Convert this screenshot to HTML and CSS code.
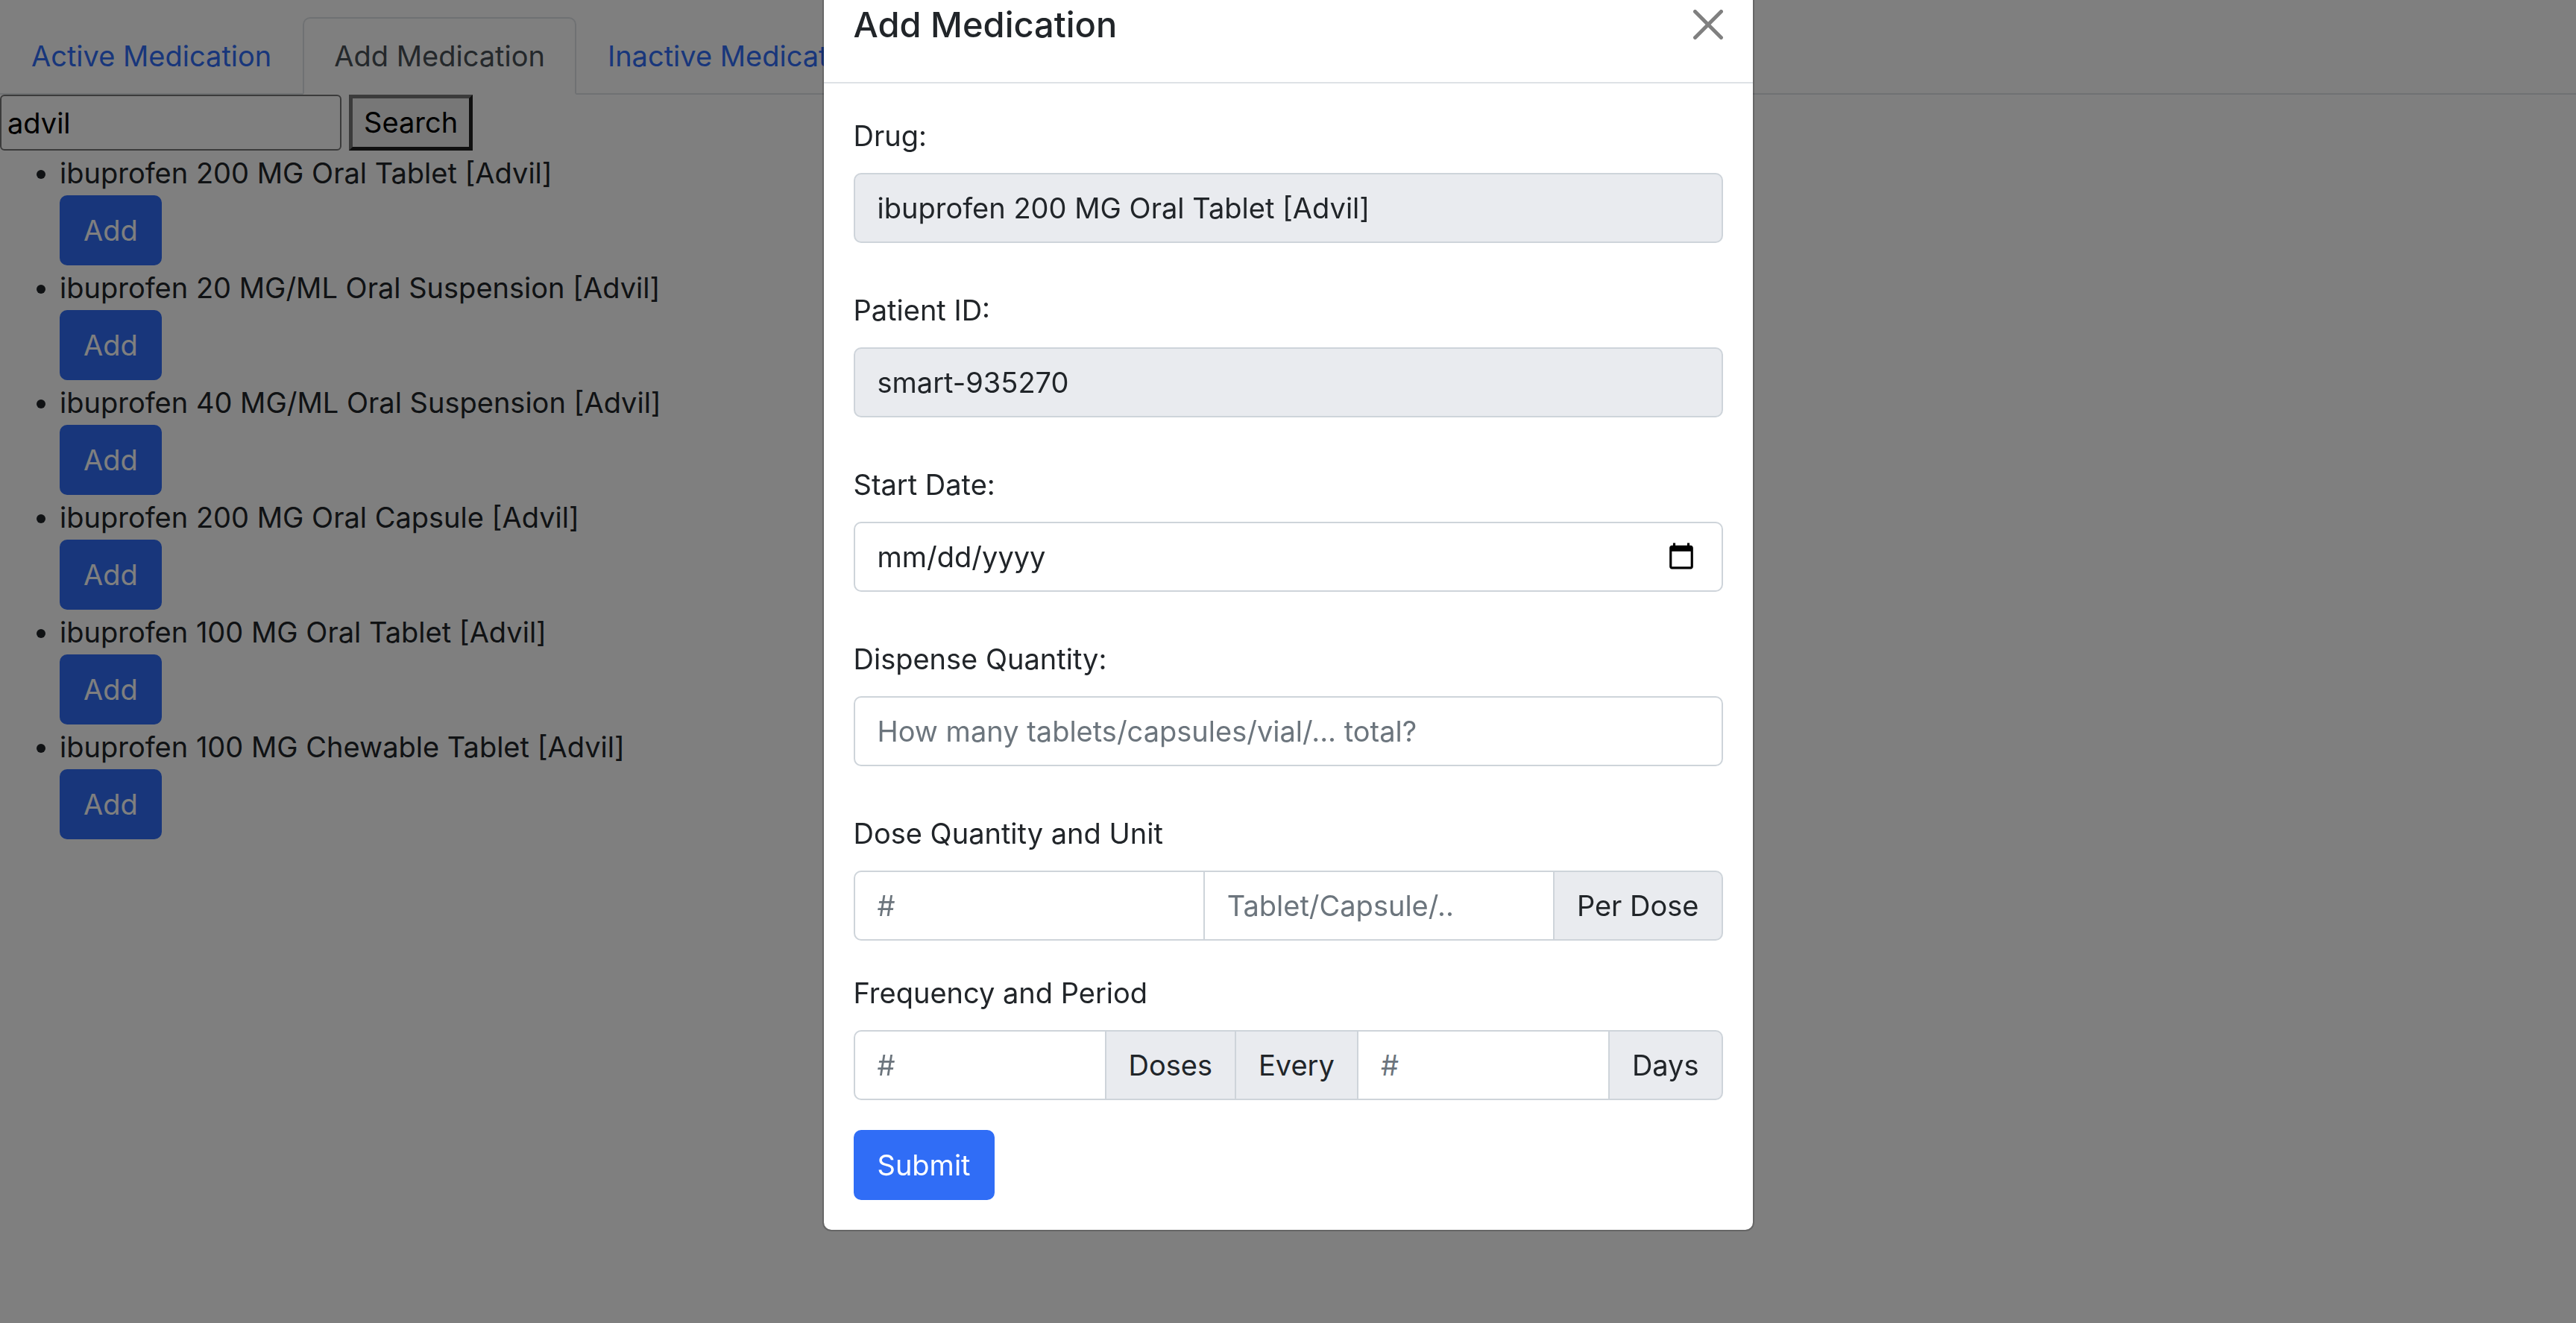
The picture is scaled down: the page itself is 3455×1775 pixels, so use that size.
FILE: index.html
```html
<!DOCTYPE html>
<html lang="en-US">
<head>
<meta charset="utf-8">
<meta name="viewport" content="width=device-width, initial-scale=1">
<title>Add Medication</title>
<link rel="stylesheet" href="styles.css">
</head>
<body>
<nav class="tabs">
  <a class="tab" href="#active">Active Medication</a>
  <a class="tab tab-current" href="#add" aria-current="page">Add Medication</a>
  <a class="tab" href="#inactive">Inactive Medication</a>
</nav>
<main>
  <form class="search">
    <input class="search-input" type="text" value="advil" aria-label="Medication name">
    <button class="search-button" type="button">Search</button>
  </form>
  <ul class="results">
    <li>ibuprofen 200 MG Oral Tablet [Advil]<div><button class="button" type="button">Add</button></div></li>
    <li>ibuprofen 20 MG/ML Oral Suspension [Advil]<div><button class="button" type="button">Add</button></div></li>
    <li>ibuprofen 40 MG/ML Oral Suspension [Advil]<div><button class="button" type="button">Add</button></div></li>
    <li>ibuprofen 200 MG Oral Capsule [Advil]<div><button class="button" type="button">Add</button></div></li>
    <li>ibuprofen 100 MG Oral Tablet [Advil]<div><button class="button" type="button">Add</button></div></li>
    <li>ibuprofen 100 MG Chewable Tablet [Advil]<div><button class="button" type="button">Add</button></div></li>
  </ul>
</main>
<div class="backdrop">
  <section class="modal" role="dialog" aria-modal="true" aria-labelledby="modal-title">
    <header class="modal-header">
      <h1 class="modal-title" id="modal-title">Add Medication</h1>
      <button class="close" type="button" aria-label="Close">
        <svg class="close-icon" viewBox="0 0 16 16" aria-hidden="true"><path d="M.293.293a1 1 0 0 1 1.414 0L8 6.586 14.293.293a1 1 0 1 1 1.414 1.414L9.414 8l6.293 6.293a1 1 0 0 1-1.414 1.414L8 9.414l-6.293 6.293a1 1 0 0 1-1.414-1.414L6.586 8 .293 1.707a1 1 0 0 1 0-1.414z"/></svg>
      </button>
    </header>
    <form class="modal-body">
      <div class="field">
        <label class="label" for="drug">Drug:</label>
        <input class="control" id="drug" type="text" value="ibuprofen 200 MG Oral Tablet [Advil]" readonly>
      </div>
      <div class="field">
        <label class="label" for="patient">Patient ID:</label>
        <input class="control" id="patient" type="text" value="smart-935270" readonly>
      </div>
      <div class="field">
        <label class="label" for="start">Start Date:</label>
        <input class="control" id="start" type="date">
      </div>
      <div class="field">
        <label class="label" for="dispense">Dispense Quantity:</label>
        <input class="control" id="dispense" type="text" placeholder="How many tablets/capsules/vial/... total?">
      </div>
      <div class="field field-group">
        <label class="label" for="dose">Dose Quantity and Unit</label>
        <div class="group">
          <input class="control" id="dose" type="text" placeholder="#">
          <input class="control" type="text" placeholder="Tablet/Capsule/.." aria-label="Dose unit">
          <span class="addon">Per Dose</span>
        </div>
      </div>
      <div class="field field-group">
        <label class="label" for="frequency">Frequency and Period</label>
        <div class="group">
          <input class="control" id="frequency" type="text" placeholder="#">
          <span class="addon">Doses</span>
          <span class="addon">Every</span>
          <input class="control" type="text" placeholder="#" aria-label="Period in days">
          <span class="addon">Days</span>
        </div>
      </div>
      <button class="button" type="submit">Submit</button>
    </form>
  </section>
</div>
</body>
</html>
```

FILE: styles.css
```css
*,
*::before,
*::after {
  box-sizing: border-box;
}

:root {
  --text: #212529;
  --muted: #6c757d;
  --primary: #306df6;
  --line: #dee2e6;
  --control-line: #ced4da;
  --fill: #e9ebef;
}

body {
  margin: 0;
  padding-top: 23px;
  background: #fff;
  color: var(--text);
  font-family: Inter, "Liberation Sans", sans-serif;
  font-size: 38px;
  line-height: 60px;
}

input,
button {
  margin: 0;
  font: inherit;
}

.tabs {
  display: flex;
  border-bottom: 2px solid var(--line);
}

.tab {
  margin-bottom: -2px;
  padding: 20px 40px;
  border: 2px solid transparent;
  border-radius: 10px 10px 0 0;
  color: var(--primary);
  text-decoration: none;
}

.tab-current {
  border-color: var(--line) var(--line) #fff;
  background: #fff;
  color: #495057;
}

.search {
  display: flex;
  gap: 10px;
}

.search-input {
  width: 458px;
  height: 75px;
  padding: 2px 8px;
  border: 2px solid #767676;
  border-radius: 6px;
  background: #fff;
  color: #000;
}

.search-button {
  height: 75px;
  padding: 0 15px;
  border: 5px outset #767676;
  background: #efefef;
  color: #000;
  line-height: 65px;
}

.results {
  margin: 0;
  padding-left: 80px;
}

.button {
  display: block;
  padding: 15px 30px;
  border: 2px solid var(--primary);
  border-radius: 10px;
  background: var(--primary);
  color: #fff;
}

.backdrop {
  position: fixed;
  inset: 0;
  display: flex;
  align-items: flex-start;
  justify-content: center;
  background: rgba(0, 0, 0, 0.5);
}

/* The dialog is scrolled a little past the top of the window. */
.modal {
  width: 100%;
  max-width: 1250px;
  margin-top: -47px;
  border: 2px solid rgba(0, 0, 0, 0.2);
  border-radius: 12px;
  background: #fff;
  background-clip: padding-box;
}

.modal-header {
  display: flex;
  align-items: center;
  justify-content: space-between;
  padding: 40px;
  border-bottom: 2px solid var(--line);
}

.modal-title {
  margin: 0;
  font-size: 47px;
  font-weight: 500;
  line-height: 75px;
}

.close {
  display: flex;
  padding: 0;
  border: 0;
  background: none;
}

.close-icon {
  width: 40px;
  height: 40px;
  fill: #808080;
}

.modal-body {
  padding: 40px;
}

.field {
  margin-bottom: 60px;
}

.field-group {
  margin-bottom: 40px;
}

.label {
  display: block;
  margin-bottom: 20px;
}

.control {
  display: block;
  width: 100%;
  height: 94px;
  padding: 15px 30px;
  border: 2px solid var(--control-line);
  border-radius: 10px;
  background: #fff;
  color: var(--text);
}

.control:read-only {
  background: var(--fill);
}

.control::placeholder {
  color: var(--muted);
  opacity: 1;
}

.control::-webkit-datetime-edit,
.control::-webkit-datetime-edit-fields-wrapper,
.control::-webkit-datetime-edit-text,
.control::-webkit-datetime-edit-month-field,
.control::-webkit-datetime-edit-day-field,
.control::-webkit-datetime-edit-year-field {
  padding: 0;
}

.control::-webkit-calendar-picker-indicator {
  width: 40px;
  height: 40px;
  margin-right: 4px;
  padding: 0;
}

.group {
  display: flex;
}

.group > * + * {
  margin-left: -2px;
}

.group > :not(:first-child) {
  border-top-left-radius: 0;
  border-bottom-left-radius: 0;
}

.group > :not(:last-child) {
  border-top-right-radius: 0;
  border-bottom-right-radius: 0;
}

.group .control {
  flex: 1;
  min-width: 0;
}

.addon {
  padding: 15px 30px;
  border: 2px solid var(--control-line);
  border-radius: 10px;
  background: var(--fill);
  white-space: nowrap;
}
```
